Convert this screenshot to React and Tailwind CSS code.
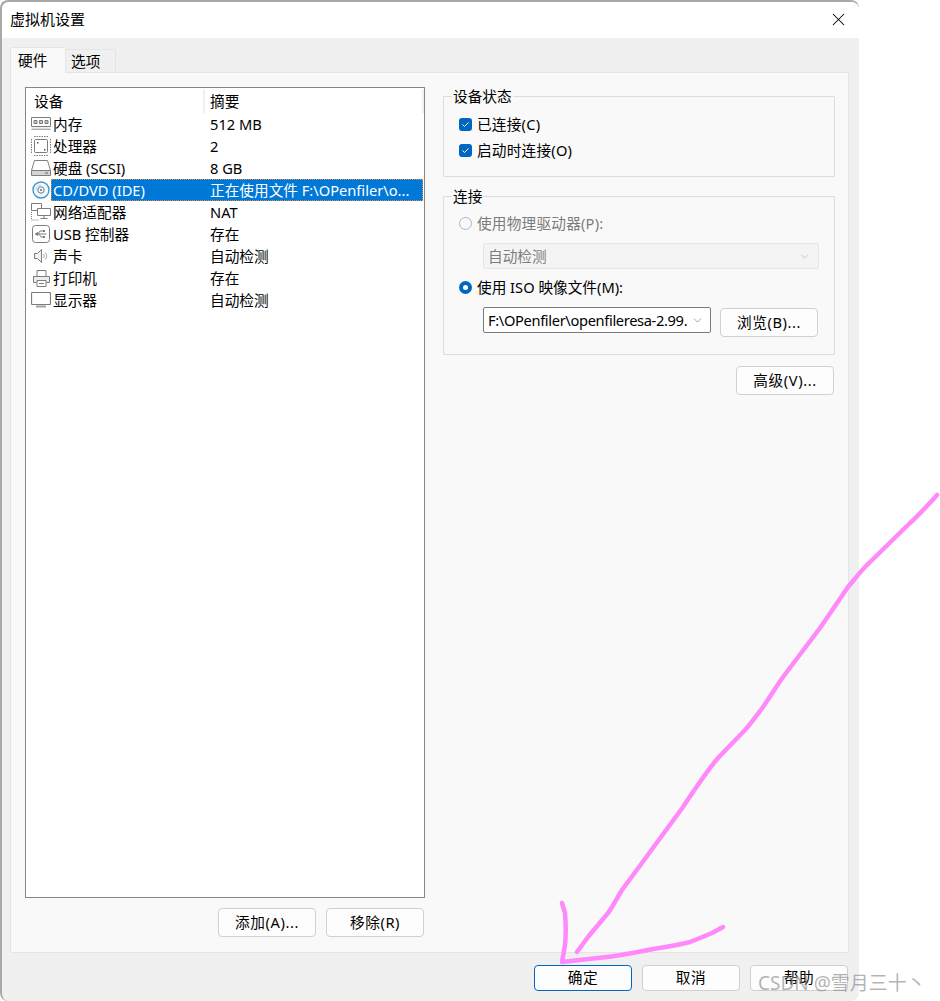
import { ChevronDown, X } from "lucide-react";

const stroke = "#7d7d7d";

const MemoryIcon = () => (
  <svg width="20" height="14" viewBox="0 0 20 14" fill="none" stroke={stroke}>
    <path d="M.5.5h19v9h-19zM.5 12.5h19" />
    <path d="M3 3.5h3v3H3zM8.5 3.5h3v3h-3zM14 3.5h3v3h-3z" fill="#c4c4c4" />
    <path d="M1 10.5h18v2H1z" fill="#dcdcdc" stroke="none" />
  </svg>
);

const CpuIcon = () => (
  <svg width="20" height="20" viewBox="0 0 20 20" fill="none" stroke={stroke}>
    <rect x="3.5" y="3.5" width="13" height="13" rx="1" />
    <path d="M3 .5h14M3 19.5h14M.5 3v14M19.5 3v14" strokeDasharray="1.5 1" />
    <path d="M6 6h1.5v1.5H6zM13 13h1.5v1.5H13z" fill="#555" stroke="none" />
  </svg>
);

const DiskIcon = () => (
  <svg width="20" height="16" viewBox="0 0 20 16" fill="none" stroke={stroke}>
    <path d="M.5 10.5 3.5.5h13l3 10v5H.5z" />
    <path d="M.5 10.5h19" />
    <path d="M1 11h18v4H1z" fill="#d4d4d4" stroke="none" />
    <path d="M14 13h3" stroke="#666" />
  </svg>
);

const CdIcon = () => (
  <svg width="18" height="18" viewBox="0 0 18 18" fill="none">
    <circle cx="9" cy="9" r="8" fill="#f4f8fb" stroke="#3f97cf" strokeWidth="1.4" />
    <circle cx="9" cy="9" r="3.2" stroke="#6b7c88" />
    <circle cx="9" cy="9" r="1.1" fill="#6b7c88" />
    <path d="M4 9a5 5 0 0 1 5-5" stroke="#b5cfe0" />
  </svg>
);

const NetworkIcon = () => (
  <svg width="20" height="18" viewBox="0 0 20 18" fill="none" stroke={stroke}>
    <path d="M.5.5h10v7H.5z" fill="#fff" />
    <path d="M6.5 5.5h13v7h-13z" fill="#fff" />
    <path d="M13 12.5v3M9.5 15.5h7" />
    <path d="M.5 9v8M.5 17h8" strokeDasharray="1 1" />
  </svg>
);

const UsbIcon = () => (
  <svg width="18" height="18" viewBox="0 0 18 18" fill="none" stroke={stroke}>
    <rect x=".5" y=".5" width="17" height="17" rx="3" />
    <path d="M3.5 9h11M6 9l2-3h3M7 9l2 3h2" />
    <path d="M3.5 9 5.5 7.5v3z" fill={stroke} />
    <path d="M11 5h2v2h-2zM11 11h2v2h-2z" fill={stroke} stroke="none" />
  </svg>
);

const SpeakerIcon = () => (
  <svg width="15" height="14" viewBox="0 0 15 14" fill="none" stroke={stroke}>
    <path d="M.5 4.5h3l4-4v13l-4-4h-3z" fill="#f2f2f2" />
    <path d="M9.5 5a3 3 0 0 1 0 4M11.5 3.5a5.5 5.5 0 0 1 0 7" stroke="#a8a8a8" />
  </svg>
);

const PrinterIcon = () => (
  <svg width="17" height="17" viewBox="0 0 17 17" fill="none" stroke={stroke}>
    <path d="M4 6V.5h9V6" />
    <path d="M3.5 12.5h-3v-6h16v6h-3" fill="#ededed" />
    <path d="M4 10.5h9v6H4z" fill="#fff" />
    <path d="M6 13.5h5" />
  </svg>
);

const MonitorIcon = () => (
  <svg width="20" height="16" viewBox="0 0 20 16" fill="none" stroke={stroke}>
    <rect x=".5" y=".5" width="19" height="12" rx="1" strokeWidth="1.2" />
    <path d="M5 14.5h10" stroke="#a0a0a0" strokeWidth="2" />
  </svg>
);

const devices = [
  { name: "内存", value: "512 MB", icon: MemoryIcon },
  { name: "处理器", value: "2", icon: CpuIcon },
  { name: "硬盘 (SCSI)", value: "8 GB", icon: DiskIcon },
  { name: "CD/DVD (IDE)", value: "正在使用文件 F:\\OPenfiler\\o...", icon: CdIcon, selected: true },
  { name: "网络适配器", value: "NAT", icon: NetworkIcon },
  { name: "USB 控制器", value: "存在", icon: UsbIcon },
  { name: "声卡", value: "自动检测", icon: SpeakerIcon },
  { name: "打印机", value: "存在", icon: PrinterIcon },
  { name: "显示器", value: "自动检测", icon: MonitorIcon },
];

function Button({ children, primary, className = "" }) {
  return (
    <button
      className={`flex w-[98px] items-center justify-center rounded-[4px] border bg-[#fdfdfd] pb-[2px] text-[14.67px] tracking-[0.6px] text-black ${
        primary ? "border-[#0067c0]" : "border-[#d0d0d0]"
      } ${className}`}
    >
      {children}
    </button>
  );
}

function Check({ label }) {
  return (
    <div className="flex h-[22px] items-center">
      <span className="ml-[15px] flex h-[13px] w-[13px] items-center justify-center rounded-[3px] bg-[#0067c0]">
        <svg width="9" height="9" viewBox="0 0 9 9" fill="none" stroke="#fff">
          <path d="m1.5 4.5 2 2 4-4" />
        </svg>
      </span>
      <span className="ml-[5px] tracking-[0.2px]">{label}</span>
    </div>
  );
}

function Group({ title, className = "", children }) {
  return (
    <fieldset className={`rounded-[1px] border border-[#dcdcdc] ${className}`}>
      <legend className="ml-[8px] h-[20px] bg-[#f9f9f9] px-px leading-[20px]">{title}</legend>
      {children}
    </fieldset>
  );
}

export default function App() {
  return (
    <div className="relative h-[1001px] w-[940px] overflow-hidden bg-white font-['Noto_Sans','Noto_Sans_CJK_SC',sans-serif] text-[14.67px] text-black">
      <div className="flex h-[1001px] w-[859px] flex-col rounded-[8px] border-t-2 border-l-2 border-[#a9a9a9] bg-[#f0f0f0]">
        <div className="flex h-[36px] items-center justify-between rounded-t-[8px] bg-white pr-[10px] pb-[2px] pl-[8px]">
          <span className="text-[15px]">虚拟机设置</span>
          <X size={21} strokeWidth={1.2} />
        </div>

        <div className="flex pt-[9px] pl-[8px]">
          <div className="relative z-10 -mb-px flex h-[26px] w-[56px] items-center rounded-t-[2px] border border-b-0 border-[#e5e5e5] bg-[#f9f9f9] pb-[2px] pl-[7px]">
            硬件
          </div>
          <div className="mt-[2px] flex h-[23px] w-[50px] items-center border border-b-0 border-l-0 border-[#e5e5e5] bg-[#f0f0f0] pl-[5px]">
            选项
          </div>
        </div>

        <div className="ml-[8px] flex w-[839px] flex-1 border border-[#e5e5e5] bg-[#f9f9f9]">
          <div className="flex w-[414px] flex-col pt-[14px] pb-[15px] pl-[14px]">
            <div className="flex-1 border border-[#82878f] bg-white">
              <div className="flex h-[25px] items-center">
                <span className="w-[179px] border-r-2 border-[#f0f0f0] pl-[8px] leading-[24px]">设备</span>
                <span className="flex-1 border-r-2 border-[#f0f0f0] pl-[5px] leading-[24px]">摘要</span>
              </div>
              {devices.map((item) => {
                const Icon = item.icon;
                return (
                  <div key={item.name} className="flex h-[22px] items-center pr-px">
                    <span className="flex w-[25px] shrink-0 items-center justify-center pl-[5px]">
                      <Icon />
                    </span>
                    <div
                      className={`flex h-[22px] flex-1 items-center ${
                        item.selected
                          ? "border border-dotted border-[#e08a3c] bg-[#0078d7] text-white"
                          : "border border-transparent"
                      }`}
                    >
                      <span className="w-[158px] pl-px whitespace-nowrap">{item.name}</span>
                      <span className="whitespace-nowrap">{item.value}</span>
                    </div>
                  </div>
                );
              })}
            </div>
            <div className="mt-[10px] flex h-[29px] justify-end gap-[10px] pr-px">
              <Button>添加(A)...</Button>
              <Button>移除(R)</Button>
            </div>
          </div>

          <div className="ml-[18px] flex w-[392px] flex-col pt-[13px]">
            <Group title="设备状态" className="h-[91px]">
              <div className="flex flex-col gap-[4px] pt-[7px]">
                <Check label="已连接(C)" />
                <Check label="启动时连接(O)" />
              </div>
            </Group>

            <Group title="连接" className="mt-[9px] h-[169px]">
              <div className="mt-[6px] flex h-[22px] items-center text-[#7c7c7c]">
                <span className="ml-[15px] h-[13px] w-[13px] rounded-full border border-[#b5b5b5] bg-[#f9f9f9]" />
                <span className="ml-[5px] tracking-[0.2px]">使用物理驱动器(P):</span>
              </div>
              <div className="mt-[9px] ml-[39px] flex h-[26px] w-[336px] items-center justify-between rounded-[2px] border border-[#e6e6e6] bg-[#f4f4f4] pr-[7px] pb-px pl-[4px] text-[#7c7c7c]">
                自动检测
                <ChevronDown size={13} strokeWidth={1} className="mt-px text-[#a0a0a0]" />
              </div>
              <div className="mt-[7px] flex h-[22px] items-center">
                <span className="ml-[15px] flex h-[13px] w-[13px] items-center justify-center rounded-full bg-[#0067c0]">
                  <span className="h-[5px] w-[5px] rounded-full bg-white" />
                </span>
                <span className="ml-[5px]">使用 ISO 映像文件(M):</span>
              </div>
              <div className="mt-[9px] ml-[39px] flex items-start">
                <div className="flex h-[26px] w-[228px] items-center justify-between rounded-[2px] border border-[#7a7a7a] bg-white pr-[6px] pl-[4px]">
                  <span className="pb-px tracking-[-0.35px] whitespace-nowrap">F:\OPenfiler\openfileresa-2.99.</span>
                  <ChevronDown size={13} strokeWidth={1} className="text-[#555]" />
                </div>
                <Button className="mt-px ml-[9px] h-[29px]">浏览(B)...</Button>
              </div>
            </Group>

            <div className="mt-[11px] flex justify-end">
              <Button className="mr-px h-[29px]">高级(V)...</Button>
            </div>
          </div>
        </div>

        <div className="flex h-[48px] justify-end gap-[10px] pt-[12px] pr-[11px] pb-[10px]">
          <Button primary>确定</Button>
          <Button>取消</Button>
          <Button>帮助</Button>
        </div>
      </div>

      {/* pen annotation on top of the screenshot */}
      <svg className="pointer-events-none absolute inset-0" width="940" height="1001" fill="none" stroke="#ff88fb" strokeWidth="4.5" strokeLinecap="round" strokeLinejoin="round">
        <path d="M937 495C928 505 920 514 910 523L867 565C860 572 854 580 848 587L820 628L783 677C776 687 770 697 763 707C757 715 751 723 745 730L718 758C706 772 695 789 683 807L650 852L622 890C617 898 613 906 608 913L588 937L577 952" />
        <path d="M562 903L565 913C566 925 566 935 565 945L562 962L607 957C623 955 638 952 653 949C666 947 678 945 690 942C698 939 705 936 712 933L723 927" />
      </svg>

      <span className="absolute top-[966px] left-[758px] text-[19px] leading-[34px] whitespace-nowrap text-[#80808099]">
        CSDN @雪月三十丶
      </span>
    </div>
  );
}
